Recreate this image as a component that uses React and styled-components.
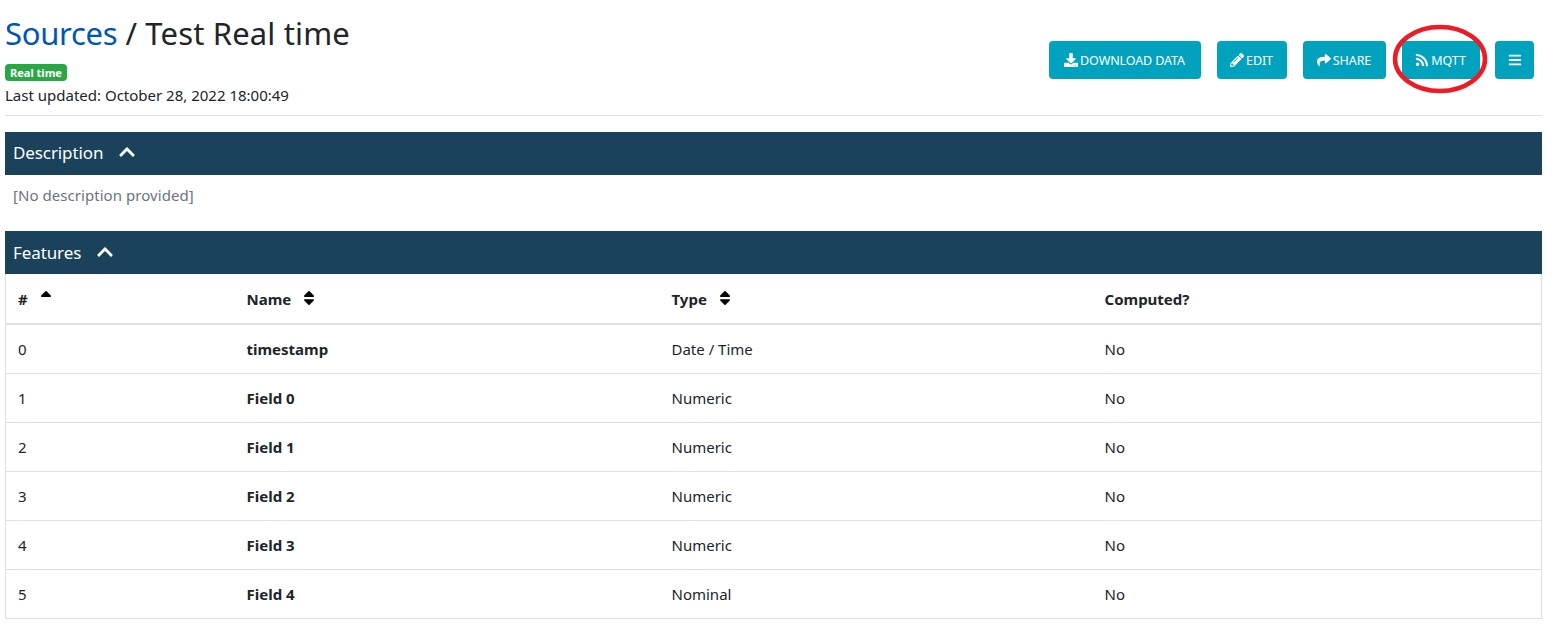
import styled, { createGlobalStyle } from 'styled-components';
import { FaDownload, FaPencilAlt, FaShare, FaRss, FaBars, FaChevronUp, FaSort, FaSortUp } from 'react-icons/fa';

const GlobalStyle = createGlobalStyle`
  * {
    box-sizing: border-box;
  }

  body {
    margin: 0;
    background: #fff;
    color: #212529;
    font-family: "Noto Sans", "Open Sans", "Liberation Sans", sans-serif;
    font-size: 15px;
  }
`

const Page = styled.div`
  width: 1542px;
  padding: 13px 0 0 5px;
`

const Header = styled.header`
  display: flex;
  justify-content: space-between;
  height: 103px;
  border-bottom: 1px solid #dee2e6;
`

const Heading = styled.h1`
  margin: 0;
  font-size: 31px;
  font-weight: 400;
  line-height: 40px;
  letter-spacing: 0.15px;
`

const SourcesLink = styled.a`
  color: #0056b3;
  letter-spacing: -0.3px;
  text-decoration: none;
`

const Badge = styled.span`
  display: block;
  width: 62px;
  height: 17px;
  margin-top: 11px;
  background: #28a745;
  border-radius: 4px;
  color: #fff;
  font-size: 11px;
  font-weight: 700;
  line-height: 17px;
  text-align: center;
`

const Updated = styled.div`
  margin-top: 4px;
  font-size: 15px;
  line-height: 20px;
`

const Actions = styled.div`
  position: relative;
  display: flex;
  gap: 16px;
  height: 38px;
  margin: 28px 8px 0 0;
`

const ActionButton = styled.button`
  display: flex;
  align-items: center;
  justify-content: center;
  gap: 2px;
  width: ${({ $width }) => $width}px;
  height: 38px;
  margin-left: ${({ $tight }) => ($tight ? '-1px' : '0')};
  padding: 0 ${({ $tight }) => ($tight ? '0' : '1px')} 0 0;
  background: #01a2bd;
  border: 0;
  border-radius: 4px;
  color: #fff;
  font-family: inherit;
  font-size: 12.5px;
  letter-spacing: -0.1px;

  svg {
    font-size: 14px;
  }
`

const Circle = styled.svg`
  position: absolute;
  top: -16px;
  left: 343px;
  width: 96px;
  height: 70px;
  overflow: visible;
`

const SectionBar = styled.div`
  display: flex;
  align-items: center;
  gap: 15px;
  height: 43px;
  margin-top: ${({ $top }) => $top}px;
  padding: 0 0 ${({ $lift }) => ($lift ? '2px' : '0')} 8px;
  background: #1a425b;
  color: #fff;
  font-size: 17px;
  letter-spacing: -0.1px;

  svg {
    margin-bottom: 2px;
    font-size: 18px;
  }
`

const Description = styled.p`
  height: 56px;
  margin: 0;
  padding: 10px 8px 0;
  color: #6c757d;
  font-size: 15px;
  line-height: 20px;
  letter-spacing: 0.05px;
`

const Table = styled.table`
  width: 100%;
  border-collapse: collapse;
  table-layout: fixed;
  border-left: 1px solid #dee2e6;
  border-right: 1px solid #dee2e6;
  font-size: 15px;
`

const HeadCell = styled.th`
  width: ${({ $width }) => $width}px;
  height: 50px;
  padding: 0 0 0 12px;
  border-bottom: 2px solid #dee2e6;
  font-weight: 700;
  text-align: left;

  svg {
    margin-left: ${({ $gap }) => $gap || 5}px;
    color: #000;
    font-size: 18px;
    vertical-align: -2px;
  }
`

const Cell = styled.td`
  height: 49px;
  padding: 0 0 0 12px;
  border-bottom: 1px solid #dee2e6;
  font-weight: ${({ $bold }) => ($bold ? 700 : 400)};
`

const features = [
  { id: 0, name: 'timestamp', type: 'Date / Time' },
  { id: 1, name: 'Field 0', type: 'Numeric' },
  { id: 2, name: 'Field 1', type: 'Numeric' },
  { id: 3, name: 'Field 2', type: 'Numeric' },
  { id: 4, name: 'Field 3', type: 'Numeric' },
  { id: 5, name: 'Field 4', type: 'Nominal' },
];

const App = () => (
  <Page>
    <GlobalStyle />
    <Header>
      <div>
        <Heading><SourcesLink href="#">Sources</SourcesLink> / Test Real time</Heading>
        <Badge>Real time</Badge>
        <Updated>Last updated: October 28, 2022 18:00:49</Updated>
      </div>
      <Actions>
        <ActionButton $width={152}><FaDownload />DOWNLOAD DATA</ActionButton>
        <ActionButton $width={70}><FaPencilAlt />EDIT</ActionButton>
        <ActionButton $width={83}><FaShare />SHARE</ActionButton>
        <ActionButton $width={78}><FaRss />MQTT</ActionButton>
        <ActionButton $width={39} $tight><FaBars /></ActionButton>
        <Circle viewBox="0 0 96 70">
          <ellipse cx="48" cy="34" rx="45" ry="32" fill="none" stroke="#ed1c24" strokeWidth="4.5" />
        </Circle>
      </Actions>
    </Header>
    <SectionBar $top={16} $lift>Description <FaChevronUp /></SectionBar>
    <Description>[No description provided]</Description>
    <SectionBar $top={0}>Features <FaChevronUp /></SectionBar>
    <Table>
      <thead>
        <tr>
          <HeadCell $width={229}># <FaSortUp /></HeadCell>
          <HeadCell $width={425}>Name <FaSort /></HeadCell>
          <HeadCell $width={433}>Type <FaSort /></HeadCell>
          <HeadCell>Computed?</HeadCell>
        </tr>
      </thead>
      <tbody>
        {features.map(feature => (
          <tr key={feature.id}>
            <Cell>{feature.id}</Cell>
            <Cell $bold>{feature.name}</Cell>
            <Cell>{feature.type}</Cell>
            <Cell>No</Cell>
          </tr>
        ))}
      </tbody>
    </Table>
  </Page>
);

export default App;
